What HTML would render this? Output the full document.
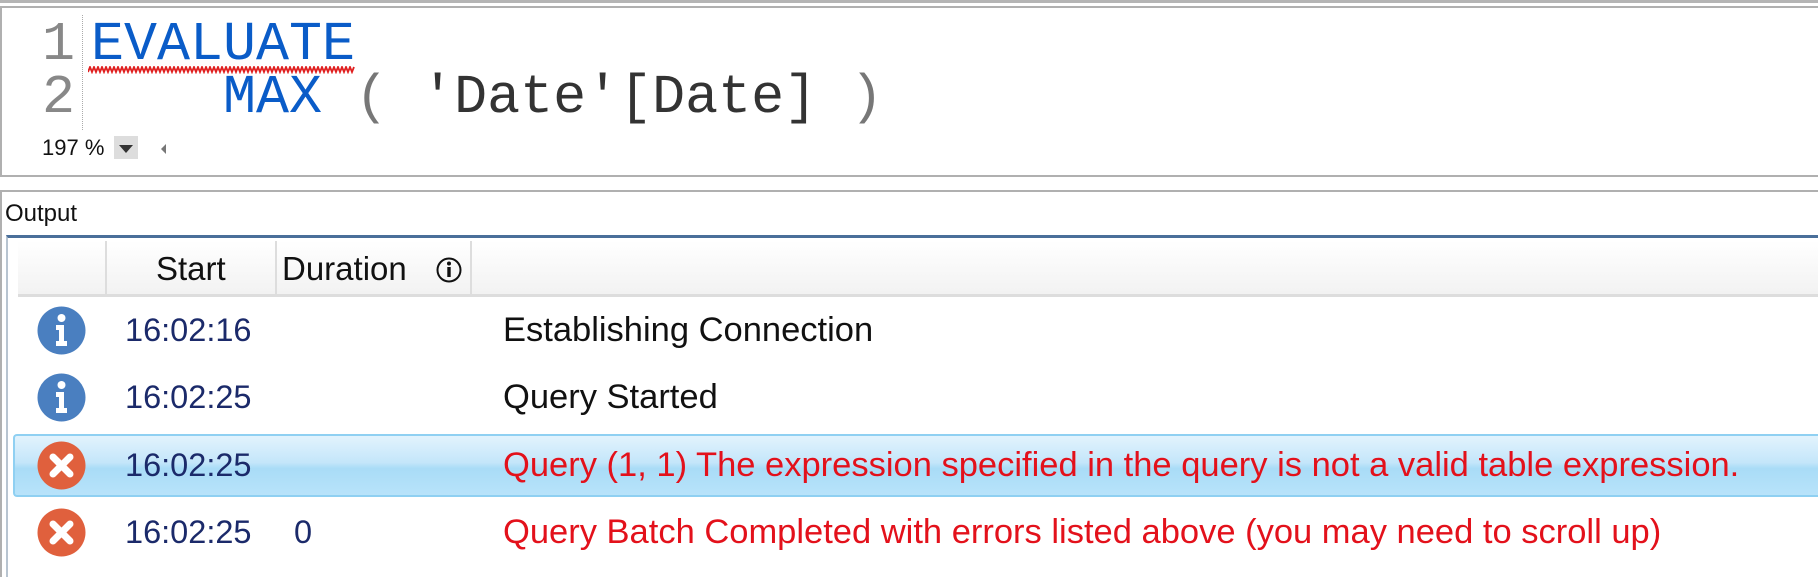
<!DOCTYPE html>
<html><head><style>
*{margin:0;padding:0;box-sizing:border-box}
body{width:1818px;height:577px;background:#fff;position:relative;overflow:hidden;font-family:"Liberation Sans",sans-serif}
.a{position:absolute;white-space:pre}
.mono{font-family:"Liberation Mono",monospace;font-size:55px;line-height:57px}
.row{position:absolute;left:13px;right:0;height:63px}
.t{position:absolute;left:112px;font-size:32.5px;color:#1b2a6a;top:13px}
.m{position:absolute;left:490px;font-size:34.5px;top:12px;color:#111}
.ic{position:absolute;left:24px;top:7px;width:49px;height:49px}
</style></head><body>
<div class="a" style="left:0;top:0;width:1818px;height:3px;background:#b5b5b5"></div>
<div class="a" style="left:0;top:6px;width:1818px;height:171px;border:2px solid #b0b0b0;border-right:none"></div>
<div class="a" style="left:82px;top:15px;height:115px;border-left:1px dotted #aaa"></div>
<div class="a mono" style="left:42px;top:16px;color:#888">1</div>
<div class="a mono" style="left:42px;top:69px;color:#888">2</div>
<div class="a" style="left:42px;top:124px;width:40px;height:7px;overflow:hidden"><div class="mono" style="margin-top:-50px;color:#999">3</div></div>
<div class="a mono" style="left:91px;top:16px;color:#0a5cc8">EVALUATE</div>
<svg class="a" style="left:88px;top:66px" width="268" height="8"><polyline fill="none" stroke="#e02020" stroke-width="1.8" points="0,6 2,1 4,6 6,1 8,6 10,1 12,6 14,1 16,6 18,1 20,6 22,1 24,6 26,1 28,6 30,1 32,6 34,1 36,6 38,1 40,6 42,1 44,6 46,1 48,6 50,1 52,6 54,1 56,6 58,1 60,6 62,1 64,6 66,1 68,6 70,1 72,6 74,1 76,6 78,1 80,6 82,1 84,6 86,1 88,6 90,1 92,6 94,1 96,6 98,1 100,6 102,1 104,6 106,1 108,6 110,1 112,6 114,1 116,6 118,1 120,6 122,1 124,6 126,1 128,6 130,1 132,6 134,1 136,6 138,1 140,6 142,1 144,6 146,1 148,6 150,1 152,6 154,1 156,6 158,1 160,6 162,1 164,6 166,1 168,6 170,1 172,6 174,1 176,6 178,1 180,6 182,1 184,6 186,1 188,6 190,1 192,6 194,1 196,6 198,1 200,6 202,1 204,6 206,1 208,6 210,1 212,6 214,1 216,6 218,1 220,6 222,1 224,6 226,1 228,6 230,1 232,6 234,1 236,6 238,1 240,6 242,1 244,6 246,1 248,6 250,1 252,6 254,1 256,6 258,1 260,6 262,1 264,6 266,1"/></svg>
<div class="a mono" style="left:91px;top:69px;color:#333"><span style="color:#fff">    </span><span style="color:#0a5cc8">MAX</span> <span style="color:#777">(</span> 'Date'[Date] <span style="color:#777">)</span></div>
<div class="a" style="left:42px;top:135px;font-size:22px;color:#111">197 %</div>
<div class="a" style="left:114px;top:136px;width:24px;height:23px;background:#ddd"></div>
<div class="a" style="left:119px;top:145px;border-left:7px solid transparent;border-right:7px solid transparent;border-top:8px solid #333"></div>
<div class="a" style="left:161px;top:144px;border-top:5px solid transparent;border-bottom:5px solid transparent;border-right:5px solid #777"></div>

<div class="a" style="left:0;top:190px;width:1818px;height:387px;border-top:2px solid #b0b0b0;border-left:2px solid #b0b0b0"></div>
<div class="a" style="left:5px;top:200px;font-size:24px;color:#111">Output</div>
<div class="a" style="left:6px;top:235px;width:1812px;height:342px;border-top:3px solid #4a6f9a;border-left:2px solid #b8c4d0"></div>
<div class="a" style="left:18px;top:241px;width:1800px;height:56px;background:linear-gradient(#fff,#f2f2f2);border-bottom:3px solid #ddd"></div>
<div class="a" style="left:105px;top:241px;height:56px;border-left:2px solid #ddd"></div>
<div class="a" style="left:275px;top:241px;height:56px;border-left:2px solid #ddd"></div>
<div class="a" style="left:470px;top:241px;height:56px;border-left:2px solid #ddd"></div>
<div class="a" style="left:156px;top:250px;font-size:33px;color:#111">Start</div>
<div class="a" style="left:282px;top:250px;font-size:33px;color:#111">Duration</div>
<svg class="a" style="left:435px;top:256px" width="28" height="28"><circle cx="14" cy="14" r="11.5" fill="none" stroke="#111" stroke-width="2"/><rect x="12.3" y="11" width="3.4" height="10" fill="#111"/><circle cx="14" cy="7.5" r="2" fill="#111"/></svg>

<div class="row" style="top:299px">
<svg class="ic" viewBox="0 0 49 49"><circle cx="24.5" cy="24.5" r="24" fill="#4a7fc0"/><circle cx="24.5" cy="12" r="4" fill="#fff"/><path d="M19 19h8v16h3v5h-11v-5h3v-11h-3z" fill="#fff"/></svg>
<div class="t">16:02:16</div><div class="m">Establishing Connection</div></div>
<div class="row" style="top:366px">
<svg class="ic" viewBox="0 0 49 49"><circle cx="24.5" cy="24.5" r="24" fill="#4a7fc0"/><circle cx="24.5" cy="12" r="4" fill="#fff"/><path d="M19 19h8v16h3v5h-11v-5h3v-11h-3z" fill="#fff"/></svg>
<div class="t">16:02:25</div><div class="m">Query Started</div></div>
<div class="row" style="top:434px;background:linear-gradient(#e2f3fd,#c4e6fa 45%,#a9dcf7 55%,#b8e3fa);border:2px solid #8fd0f2;border-right:none;border-radius:4px 0 0 4px">
<svg class="ic" style="left:22px;top:5px" viewBox="0 0 49 49"><circle cx="24.5" cy="24.5" r="24" fill="#e0603d"/><path d="M16 16L33 33M33 16L16 33" stroke="#fff" stroke-width="7" stroke-linecap="round"/></svg>
<div class="t" style="left:110px;top:11px">16:02:25</div><div class="m" style="left:488px;top:10px;color:#e3111b">Query (1, 1) The expression specified in the query is not a valid table expression.</div></div>
<div class="row" style="top:501px">
<svg class="ic" viewBox="0 0 49 49"><circle cx="24.5" cy="24.5" r="24" fill="#e0603d"/><path d="M16 16L33 33M33 16L16 33" stroke="#fff" stroke-width="7" stroke-linecap="round"/></svg>
<div class="t">16:02:25</div><div class="t" style="left:281px">0</div><div class="m" style="color:#e3111b">Query Batch Completed with errors listed above (you may need to scroll up)</div></div>
</body></html>
